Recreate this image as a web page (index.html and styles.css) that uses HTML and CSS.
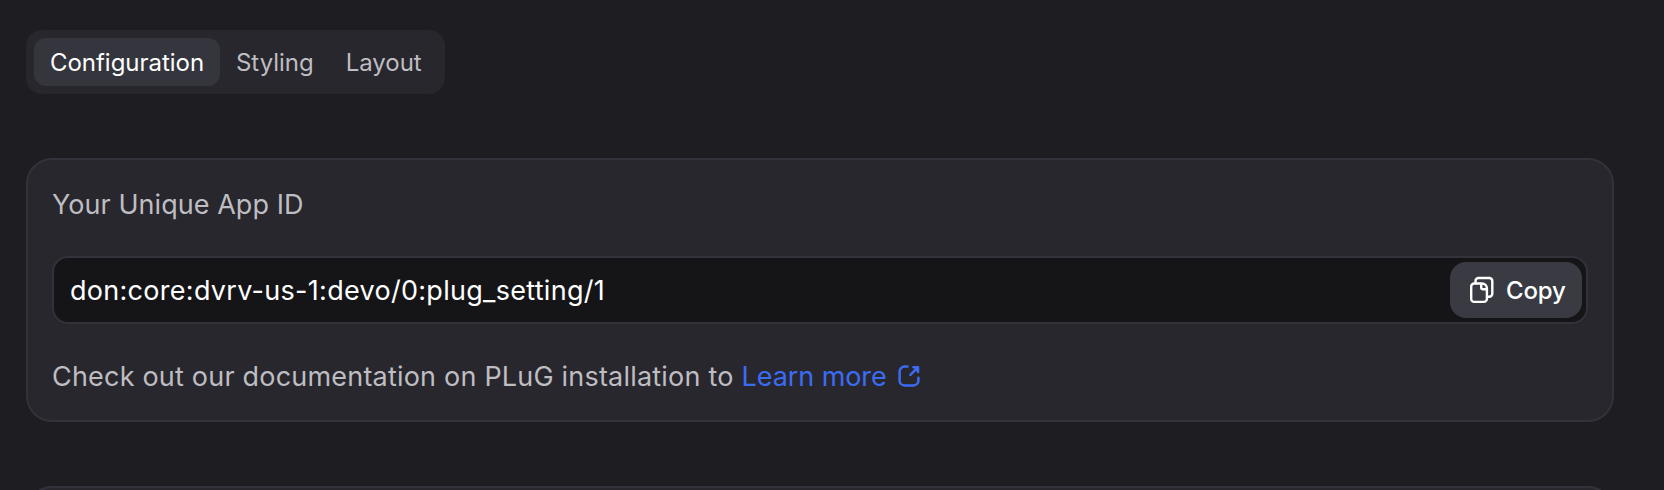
FILE: index.html
```html
<!DOCTYPE html>
<html lang="en">
<head>
<meta charset="utf-8">
<title>PLuG settings</title>
<link rel="stylesheet" href="styles.css">
</head>
<body>
<main class="page">
  <nav class="tabs">
    <button class="tab tab-active">Configuration</button>
    <button class="tab">Styling</button>
    <button class="tab">Layout</button>
  </nav>
  <section class="card">
    <h2 class="card-title">Your Unique App ID</h2>
    <div class="field">
      <span class="field-value">don:core:dvrv-us-1:devo/0:plug_setting/1</span>
      <button class="copy">
        <svg width="26" height="28" viewBox="0 0 26 28" fill="none" stroke="currentColor" stroke-width="2.4" stroke-linejoin="round" stroke-linecap="round">
          <path d="M6.500 6V5a3 3 0 0 1 3-3h10.800a3 3 0 0 1 3 3v12.800a3 3 0 0 1-3 3h-1.500"/>
          <path d="M5.200 7.500H13a4.900 4.900 0 0 1 4.900 4.900v10.500a3 3 0 0 1-3 3H5.200a3 3 0 0 1-3-3V10.500a3 3 0 0 1 3-3z"/>
          <path d="M12.200 8v3.500a1.800 1.800 0 0 0 1.800 1.800h3.600"/>
        </svg>
        <span>Copy</span>
      </button>
    </div>
    <p class="help"><span>Check out our documentation on PLuG installation to</span>
      <a class="link"><span>Learn more</span><svg width="22" height="22" viewBox="0 0 22 22" fill="none" stroke="currentColor" stroke-width="2.500" stroke-linecap="round" stroke-linejoin="round"><path d="M9.400 1.600H6.600a5 5 0 0 0-5 5v8.800a5 5 0 0 0 5 5h8.800a5 5 0 0 0 5-5v-2.600"/><path d="M15.400 2.300h4.600v4.600M19.600 2.700l-7.200 7.200"/></svg></a>
    </p>
  </section>
  <section class="card card-next"></section>
</main>
</body>
</html>
```
FILE: styles.css
```css
* { box-sizing: border-box; }
body {
  margin: 0;
  background: #1e1d22;
  color: #bebdc2;
  font-family: Inter, "Liberation Sans", sans-serif;
}
button { border: 0; background: none; color: inherit; font: inherit; letter-spacing: inherit; padding: 0; }
.page {
  display: flex;
  flex-direction: column;
  align-items: flex-start;
  height: 490px;
  overflow: hidden;
  padding: 30px 50px 0 26px;
}
.tabs {
  display: flex;
  width: 419px;
  height: 64px;
  padding: 8px;
  border-radius: 16px;
  background: #28272d;
  margin-bottom: 64px;
  font-size: 24px;
  letter-spacing: -0.03px;
}
.tab { height: 48px; padding: 0 16px; border-radius: 12px; white-space: nowrap; }
.tab-active { width: 186px; background: #35353d; color: #fff; }
.card {
  width: 1588px;
  height: 264px;
  flex: none;
  padding: 24px;
  border: 2px solid #33323a;
  border-radius: 26px;
  background: #28272d;
}
.card-next { height: 60px; margin-top: 64px; }
.card-title {
  margin: 0 0 31px;
  padding-top: 1px;
  font-size: 27px;
  line-height: 40px;
  font-weight: 400;
  letter-spacing: 0.05px;
}
.field {
  display: flex;
  align-items: center;
  justify-content: space-between;
  height: 68px;
  padding: 0 4px 0 16px;
  border: 2px solid #33323a;
  border-radius: 16px;
  background: #151517;
  color: #fff;
}
.field-value { font-size: 27px; letter-spacing: 0.29px; }
.copy {
  display: flex;
  align-items: center;
  width: 132px;
  height: 56px;
  padding-left: 19px;
  gap: 11px;
  border-radius: 16px;
  background: #3a3a42;
  font-size: 24px;
  font-weight: 500;
  letter-spacing: -0.2px;
}
.help {
  display: flex;
  align-items: center;
  gap: 8px;
  margin: 33px 0 0;
  font-size: 27px;
  line-height: 40px;
  letter-spacing: 0.2px;
  white-space: nowrap;
}
.link { display: flex; align-items: center; gap: 11px; color: #3b6cf6; letter-spacing: -0.08px; }
.link svg { margin-bottom: 2px; }
svg { flex: none; display: block; }
```
